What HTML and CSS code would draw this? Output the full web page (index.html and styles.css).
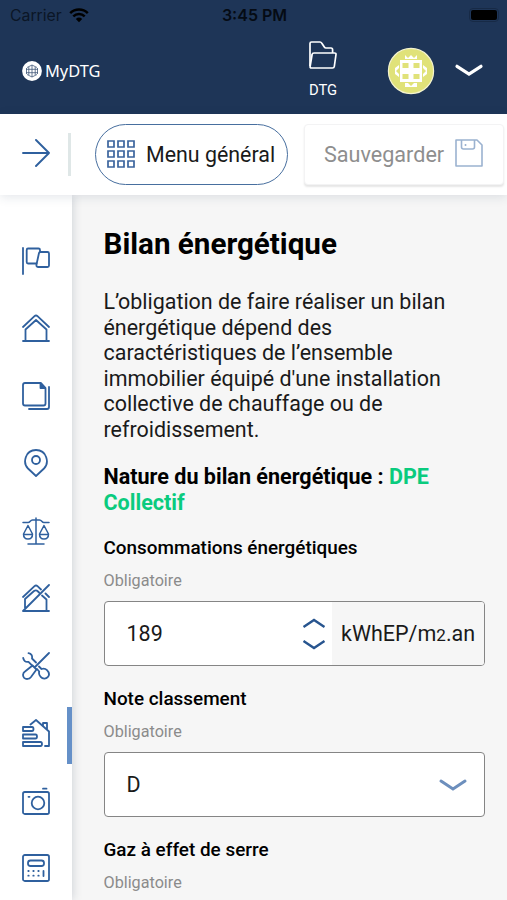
FILE: index.html
```
<!DOCTYPE html>
<html lang="fr">
<head>
    <meta charset="UTF-8">
    <meta name="viewport" content="width=device-width, initial-scale=1.0">
    <title>MyDTG - Bilan énergétique</title>
    <link rel="stylesheet" href="styles.css">
</head>
<body>

    <header class="header">
        <div class="status-bar">
            <div class="carrier">
                <span>Carrier</span>
                <svg width="20" height="15" viewBox="0 0 20 15">
                    <path d="M1.2 5.2a12.4 12.4 0 0 1 17.6 0M4.3 8.4a8.1 8.1 0 0 1 11.4 0" fill="none" stroke="#000" stroke-width="2.5"/>
                    <path d="M6.800 11a4.700 4.700 0 0 1 6.400 0L10 14.200z"/>
                </svg>
            </div>
            <span class="time">3:45 PM</span>
            <div class="battery-wrap"><div class="battery"></div></div>
        </div>
        <div class="header-row">
            <div class="logo">
                <svg width="20" height="20" viewBox="0 0 20 20">
                    <circle cx="10" cy="10" r="9.9" fill="#fff"/>
                    <path d="M5 6.500L10 4l5 2.500M4 8.300h12M4 11.700h12M5 13.500l5 2.500 5-2.500M10 4v12M6.800 6v8M13.200 6v8M4.500 7v6M15.500 7v6" fill="none" stroke="#415878" stroke-width=".8"/>
                </svg>
                <span>MyDTG</span>
            </div>
            <div class="folder">
                <svg width="28" height="28" viewBox="0 0 28 28" fill="none" stroke="#fff" stroke-width="1.7" stroke-linejoin="round">
                    <path d="M1 25V2.500Q1 1 2.500 1H11q1 0 2 1.500l2.300 3.500q.6 1 1.700 1h5q1.600 0 1.600 1.700V12"/>
                    <path d="M5 12h20.500q1.700 0 1.500 1.500l-1.700 12q-.2 1.500-1.800 1.500H2.500q-1.600 0-1.400-1.500l2-12Q3.300 12 5 12z"/>
                </svg>
                <span>DTG</span>
            </div>
            <svg class="avatar" width="48" height="48" viewBox="0 0 48 48">
                <circle cx="24" cy="24" r="22.600" fill="#e0e279" stroke="#f4f3cf" stroke-width="1.200"/>
                <path d="M13 13h22v22H13z" fill="#fff"/>
                <path d="M15.500 16h6v5h-6zM26.500 16h6v5h-6zM15.500 27h6v5h-6zM26.500 27h6v5h-6z" fill="#e0e279"/>
                <path d="M18 8l3 3 3-3 3 3 3-3v4H18zM18 36h3l3 3 3-3h3v4H18zM12 18v3l-3 3 3 3v3L8 27v-6zM36 18v3l3 3-3 3v3l4-3v-6z" fill="#fff"/>
            </svg>
            <svg class="header-chevron" width="30" height="16" viewBox="0 0 30 16">
                <path d="M3 3.300l12 7.900 12-7.900" fill="none" stroke="#fff" stroke-width="3.200" stroke-linecap="round"/>
            </svg>
        </div>
    </header>

    <div class="toolbar">
        <svg class="arrow" width="28" height="28" viewBox="0 0 28 28" fill="none" stroke="#2f609e" stroke-width="1.900" stroke-linecap="round" stroke-linejoin="round">
            <path d="M1 14h26M14 1l13 13-13 13"/>
        </svg>
        <div class="separator"></div>
        <button class="menu-button">
            <svg width="28" height="28" viewBox="0 0 28 28" fill="none" stroke="#3b649d" stroke-width="1.700">
                <path d="M1 1h6v6H1zM11 1h6v6h-6zM21 1h6v6h-6zM1 11h6v6H1zM11 11h6v6h-6zM21 11h6v6h-6zM1 21h6v6H1zM11 21h6v6h-6zM21 21h6v6h-6z"/>
            </svg>
            <span>Menu général</span>
        </button>
        <button class="save-button">
            <span>Sauvegarder</span>
            <svg width="28" height="28" viewBox="0 0 28 28" fill="none" stroke="#9bb2d0" stroke-width="1.600" stroke-linejoin="round">
                <path d="M1 1h21l5 5v21H1z"/>
                <path d="M6.500 1v7q0 2 2 2h9q2 0 2-2V1"/>
                <path d="M10.500 5v2"/>
            </svg>
        </button>
    </div>

    <div class="page">
        <nav class="sidebar">
            <a class="item"><svg viewBox="0 0 28 28">
                <path d="M1 1v26M6 1.500h10.500q1.500 0 1.500 1.500v2M6 1.500q-1.300 0-1.300 1.500v12q0 1.500 1.300 1.500h8.500"/>
                <path d="M18.500 5H25.500q1.500 0 1.500 1.500v12q0 1.500-1.500 1.500h-9q-2.500 0-2-2.500L17 6q.2-1 1.500-1z"/>
            </svg></a>
            <a class="item"><svg viewBox="0 0 28 28">
                <path d="M1 13L12.500 2.200q1.500-1.400 3 0L27 13M3.500 27V15.500L14 6l10.500 9.500V27M1 27h26"/>
            </svg></a>
            <a class="item"><svg viewBox="0 0 28 28">
                <path d="M3 1h16l4.500 5v15.500q0 2-2 2H3q-2 0-2-2V3q0-2 2-2zM27 5v20q0 2-2 2H7"/>
                <path d="M18.500 1.500V6h4.500z" fill="#2f609e"/>
            </svg></a>
            <a class="item"><svg viewBox="0 0 28 28">
                <path d="M14 27L6 19.500C0.500 14 3 1 14 1s13.500 13 8 18.500z"/>
                <circle cx="14" cy="11" r="4"/>
            </svg></a>
            <a class="item thin"><svg viewBox="0 0 28 28">
                <path d="M14 1v26M6 27h16M1 5.500h5c2.500 0 2-2.500 4.500-2.500h7c2.500 0 2 2.500 4.500 2.500h5"/>
                <path d="M6 8.500L1.500 17q0 5 4.500 5t4.500-5zM1.500 17.500h9M22 8.500L17.500 17q0 5 4.500 5t4.500-5zM17.500 17.500h9"/>
            </svg></a>
            <a class="item"><svg viewBox="0 0 28 28">
                <path d="M1 13L12.500 2.200q1.500-1.400 3 0L19 5.500M3 24V15L12 7q2-1.500 4 .5l1 1M1 27L27 1M1 27h26M24.500 27V15.500L20 11.500M23.500 9.500L27 13"/>
            </svg></a>
            <a class="item"><svg viewBox="0 0 28 28">
                <path d="M27 1L12.500 15.500M10.500 13.500l4 4L9 25c-2 2.500-5 2.500-6.800.8-1.800-1.800-1.500-4.800.8-6.300z"/>
                <path d="M6.500 1.200c3 .5 4 2.500 3.500 5.300l4 4M1.200 6c.5 2.500 2 4.500 5.300 3.800l4 4M17 14.500l2.500 2.500c2-.6 4-.3 5.500 1.200 2.300 2.300 2.500 5 .7 7s-5 1.800-7-.3c-1.600-1.600-2-3.500-1.500-5.400L15 17"/>
            </svg></a>
            <a class="item active"><svg viewBox="0 0 28 28">
                <path d="M8.500 5.500L14 1l13 11.500V27h-4M21 6.500V4h4v6.500"/>
                <path d="M1 8h9q1.500 0 1.500 2T10 12H1zM1 15.500h12.500q1.500 0 1.500 2t-1.500 2H1zM1 23h17.500q1.500 0 1.500 2t-1.500 2H1z"/>
            </svg></a>
            <a class="item"><svg viewBox="0 0 28 28">
                <rect x="1" y="5" width="26" height="22" rx="1.800"/>
                <circle cx="16" cy="16" r="6.300"/>
                <path d="M21 1.700h3.500M6.500 9.800h1"/>
            </svg></a>
            <a class="item"><svg viewBox="0 0 28 28">
                <rect x="1" y="1" width="26" height="26" rx="1.800"/>
                <rect x="6" y="6.500" width="16" height="5.500" rx="2.500"/>
                <path d="M6.300 17h.4M11.300 17h.4M16.300 17h.4M6.300 21.700h.4M11.300 21.700h.4M16.300 21.700h.4M21.500 17v5"/>
            </svg></a>
        </nav>

        <main class="content">
            <h1>Bilan énergétique</h1>
            <p class="intro">L’obligation de faire réaliser un bilan énergétique dépend des caractéristiques de l’ensemble immobilier équipé d'une installation collective de chauffage ou de refroidissement.</p>
            <p class="nature">Nature du bilan énergétique : <span class="green">DPE Collectif</span></p>

            <div class="field">
                <div class="label">Consommations énergétiques</div>
                <div class="hint">Obligatoire</div>
                <div class="input">
                    <span class="value">189</span>
                    <svg class="stepper" width="26" height="34" viewBox="0 0 26 34">
                        <path d="M2.500 10L13 3l10.500 7M2.500 24L13 31l10.500-7" fill="none" stroke="#28558f" stroke-width="2.400"/>
                    </svg>
                    <div class="unit">kWhEP/m<small>2</small>.an</div>
                </div>
            </div>

            <div class="field">
                <div class="label">Note classement</div>
                <div class="hint">Obligatoire</div>
                <div class="input">
                    <span class="value">D</span>
                    <svg class="select-arrow" width="30" height="16" viewBox="0 0 30 16">
                        <path d="M3 4l12 8 12-8" fill="none" stroke="#6d8fbd" stroke-width="3" stroke-linecap="round"/>
                    </svg>
                </div>
            </div>

            <div class="field">
                <div class="label">Gaz à effet de serre</div>
                <div class="hint">Obligatoire</div>
            </div>
        </main>
    </div>

</body>
</html>
```
FILE: styles.css
```
* {
    box-sizing: border-box;
}

body {
    margin: 0;
    height: 900px;
    overflow: hidden;
    display: flex;
    flex-direction: column;
    font-family: Roboto, sans-serif;
    color: #1a1a1a;
    background-color: #f6f6f6;
}

svg {
    display: block;
    flex-shrink: 0;
}

button {
    font-family: inherit;
    padding: 0;
}

/* Header */
.header {
    height: 114px;
    flex-shrink: 0;
    background-color: #1e3557;
    color: #fff;
}

.status-bar {
    height: 30px;
    display: grid;
    grid-template-columns: 1fr auto 1fr;
    align-items: center;
    padding: 0 8px 0 10px;
    font-family: Inter, sans-serif;
    font-size: 16px;
    color: #000;
}

.carrier {
    display: flex;
    align-items: center;
    gap: 7px;
    font-size: 15.8px;
    color: #0b1626;
}

.time {
    font-weight: 600;
    color: #050b14;
}

.battery-wrap {
    display: flex;
    justify-content: flex-end;
}

.battery {
    width: 30px;
    height: 14px;
    margin-top: -1px;
    padding: 1px;
    border: 1px solid #172a46;
    border-radius: 4px;
    background-color: #000;
    background-clip: content-box;
}

.header-row {
    height: 84px;
    display: flex;
    align-items: flex-start;
    padding-left: 22px;
}

.logo {
    width: 287px;
    display: flex;
    align-items: center;
    gap: 3px;
    margin-top: 31px;
    font-family: "Noto Sans", sans-serif;
    font-size: 16.4px;
    line-height: 20px;
}

.folder {
    width: 28px;
    display: flex;
    flex-direction: column;
    align-items: center;
    gap: 12px;
    margin-top: 11px;
    font-size: 14.8px;
    line-height: 18px;
}

.avatar {
    margin: 17px 0 0 50px;
}

.header-chevron {
    margin: 33px 0 0 19px;
}

/* Toolbar */
.toolbar {
    position: relative;
    z-index: 2;
    height: 81px;
    flex-shrink: 0;
    display: flex;
    align-items: center;
    padding: 0 3px 0 22px;
    background-color: #fff;
    box-shadow: 0 2px 10px rgba(40, 60, 90, 0.13);
}

.arrow {
    margin-top: -3px;
}

.separator {
    width: 3px;
    height: 43px;
    margin: 0 24px 0 18px;
    background-color: #dfe7e7;
}

.menu-button {
    width: 193px;
    height: 61px;
    display: flex;
    align-items: center;
    gap: 11px;
    padding-left: 11px;
    border: 1.5px solid #486f9f;
    border-radius: 31px;
    background-color: #fff;
    color: #1a1a1a;
    font-size: 21.4px;
    white-space: nowrap;
}

.menu-button svg {
    margin-top: -2px;
}

.save-button {
    width: 200px;
    height: 61px;
    display: flex;
    align-items: center;
    justify-content: space-between;
    margin-left: 16px;
    padding: 0 20px 0 19px;
    border: 1px solid #f3f3f4;
    border-radius: 4px;
    background-color: #fff;
    box-shadow: 0 2px 2px rgba(0, 0, 0, 0.1);
    color: #8e8e8e;
    font-size: 21.6px;
}

.save-button svg {
    margin-top: -4px;
}

/* Sidebar */
.page {
    flex: 1;
    min-height: 0;
    display: flex;
}

.sidebar {
    width: 72px;
    flex-shrink: 0;
    padding-top: 32px;
    background-color: #fff;
    box-shadow: 1px 0 9px rgba(40, 60, 90, 0.18);
}

.item {
    height: 67.5px;
    display: flex;
    align-items: center;
    padding-left: 22px;
}

.item svg {
    width: 28px;
    height: 28px;
    fill: none;
    stroke: #2f609e;
    stroke-width: 1.8;
    stroke-linecap: round;
    stroke-linejoin: round;
}

.item.thin svg {
    stroke-width: 1.5;
}

.item.active {
    background: linear-gradient(#6590c8, #6590c8) no-repeat right 7px / 5px 57px;
}

/* Content */
.content {
    flex: 1;
    padding: 31px 22px 0 31.5px;
}

h1 {
    margin: 0;
    font-size: 29.6px;
    line-height: 36px;
    font-weight: 700;
    color: #000;
}

.intro {
    margin: 27px 0 0;
    font-size: 21.45px;
    line-height: 25.6px;
}

.nature {
    margin: 21.6px 0 0;
    font-size: 21.55px;
    line-height: 26px;
    font-weight: 700;
    color: #000;
}

.green {
    color: #0acb7e;
}

.field {
    margin-top: 21px;
}

.nature + .field {
    margin-top: 20px;
}

.label {
    font-size: 18.9px;
    line-height: 24px;
    font-weight: 500;
    color: #000;
}

.hint {
    margin-top: 11px;
    font-size: 16.2px;
    line-height: 20px;
    color: #8b8b8b;
}

.input {
    height: 65px;
    display: flex;
    align-items: center;
    margin-top: 10px;
    border: 1.5px solid #858585;
    border-radius: 4px;
    background-color: #fff;
    font-size: 21.5px;
    overflow: hidden;
}

.value {
    flex: 1;
    padding-left: 22px;
}

.stepper {
    margin-right: 5px;
}

.unit {
    width: 152px;
    height: 100%;
    padding-left: 9px;
    background-color: #f6f6f6;
    line-height: 64px;
    white-space: nowrap;
}

.unit small {
    font-size: 17px;
}

.select-arrow {
    margin-right: 16px;
}
```
